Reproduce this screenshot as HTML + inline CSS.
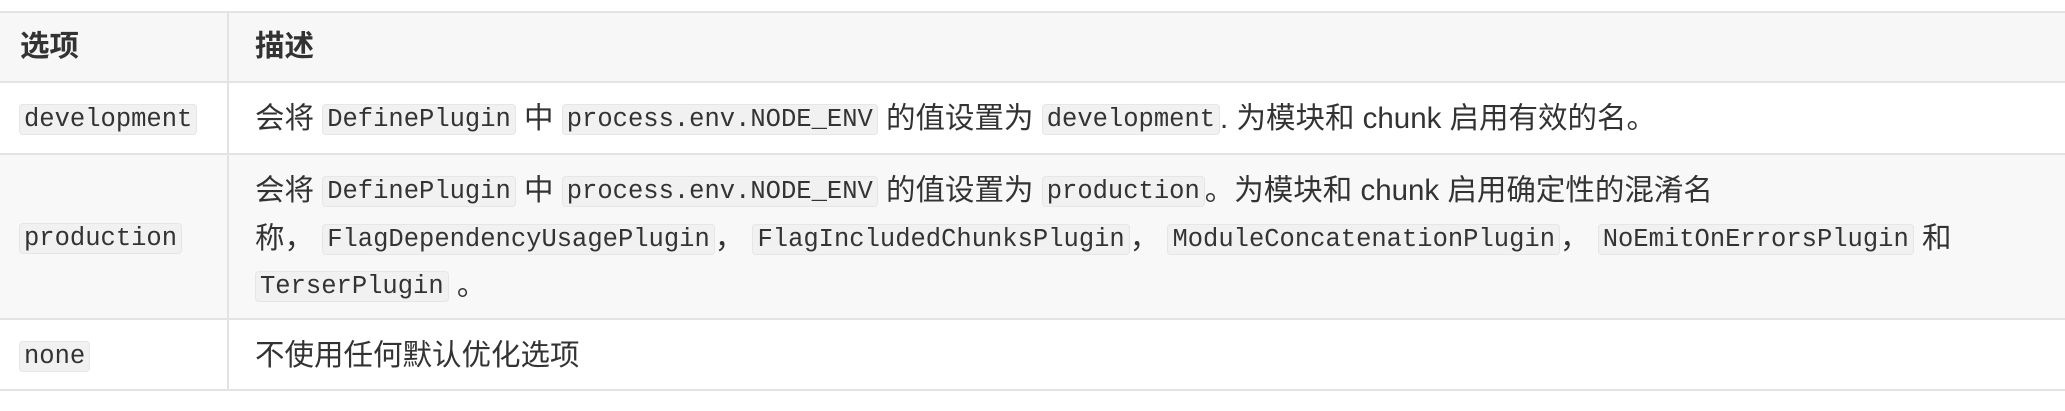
<!DOCTYPE html>
<html><head><meta charset="utf-8"><style>
html,body{margin:0;padding:0;background:#fff;width:2065px;height:411px;overflow:hidden}
body{font-family:"Liberation Sans","Noto Sans CJK SC",sans-serif;color:#333;font-size:29.5px}
.row{position:absolute;left:0;width:2065px;border-top:2px solid #e3e3e3;box-sizing:border-box}
.c1{position:absolute;left:0;top:0;bottom:0;width:229px;border-right:2px solid #e3e3e3;box-sizing:border-box}
.line{position:absolute;white-space:nowrap;line-height:32px}
code{font-family:"Liberation Mono",monospace;font-size:25.5px;background:#f1f1f1;border:1px solid #e6e6e6;border-radius:4px;padding:0 4px;color:#333;vertical-align:2px}
b{font-weight:bold}
</style></head><body>
<div class="row" style="top:11px;height:72px;background:#f7f7f7">
  <div class="c1"><div class="line" style="left:20px;top:18px"><b>选项</b></div></div>
  <div class="line" style="left:255px;top:18px"><b>描述</b></div>
</div>
<div class="row" style="top:81px;height:74px;background:#fff">
  <div class="c1"><div class="line" style="left:19px;top:20px"><code>development</code></div></div>
  <div class="line" style="left:255px;top:20px">会将 <code>DefinePlugin</code> 中 <code>process.env.NODE_ENV</code> 的值设置为 <code>development</code>. 为模块和 chunk 启用有效的名。</div>
</div>
<div class="row" style="top:153px;height:167px;background:#f8f8f8">
  <div class="c1"><div class="line" style="left:19px;top:67px"><code>production</code></div></div>
  <div class="line" style="left:255px;top:20px">会将 <code>DefinePlugin</code> 中 <code>process.env.NODE_ENV</code> 的值设置为 <code>production</code>。为模块和 chunk 启用确定性的混淆名</div>
  <div class="line" style="left:255px;top:68px">称， <code>FlagDependencyUsagePlugin</code>， <code>FlagIncludedChunksPlugin</code>， <code>ModuleConcatenationPlugin</code>， <code>NoEmitOnErrorsPlugin</code> 和</div>
  <div class="line" style="left:255px;top:115px"><code>TerserPlugin</code> 。</div>
</div>
<div class="row" style="top:318px;height:73px;background:#fff;border-bottom:2px solid #e3e3e3">
  <div class="c1"><div class="line" style="left:19px;top:20px"><code>none</code></div></div>
  <div class="line" style="left:255px;top:20px">不使用任何默认优化选项</div>
</div>
</body></html>
